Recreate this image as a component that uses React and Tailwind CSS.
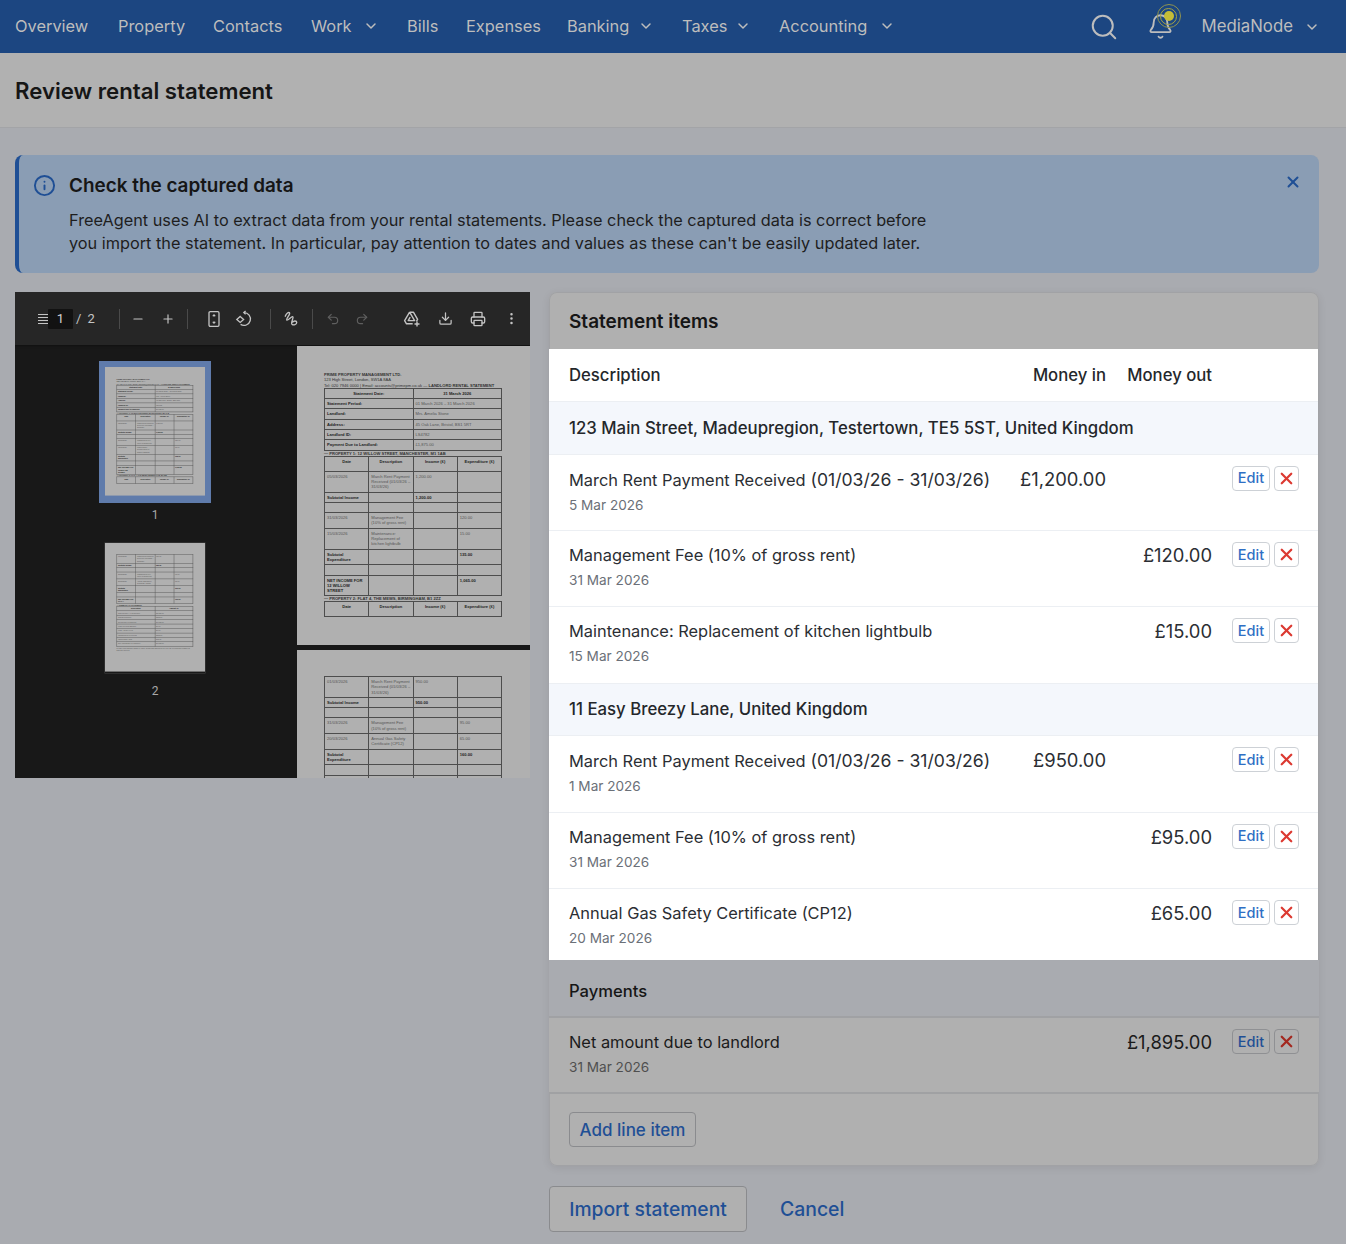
import React from "react";
import { Bell, ChevronDown, Download, Info, Minus, MoreVertical, Plus, Printer, Redo2, Search, Undo2, X } from "lucide-react";

const navItems = [
  { label: "Overview", width: "w-[103px]" },
  { label: "Property", width: "w-[95px]" },
  { label: "Contacts", width: "w-[98px]" },
  { label: "Work", width: "w-[96px]", menu: true },
  { label: "Bills", width: "w-[59px]" },
  { label: "Expenses", width: "w-[101px]" },
  { label: "Banking", width: "w-[115px]", menu: true },
  { label: "Taxes", width: "w-[97px]", menu: true },
  { label: "Accounting", width: "w-[144px]", menu: true },
];

const firstGroup = [
  { title: "March Rent Payment Received", range: "(01/03/26 - 31/03/26)", date: "5 Mar 2026", moneyIn: "£1,200.00" },
  { title: "Management Fee (10% of gross rent)", date: "31 Mar 2026", moneyOut: "£120.00" },
  { title: "Maintenance: Replacement of kitchen lightbulb", date: "15 Mar 2026", moneyOut: "£15.00" },
];

const secondGroup = [
  { title: "March Rent Payment Received", range: "(01/03/26 - 31/03/26)", date: "1 Mar 2026", moneyIn: "£950.00" },
  { title: "Management Fee (10% of gross rent)", date: "31 Mar 2026", moneyOut: "£95.00" },
  { title: "Annual Gas Safety Certificate (CP12)", date: "20 Mar 2026", moneyOut: "£65.00" },
];

const infoRows = [
  ["Statement Period:", "01 March 2026 – 31 March 2026"],
  ["Landlord:", "Mrs. Amelia Stone"],
  ["Address:", "45 Oak Lane, Bristol, BS1 5RT"],
  ["Landlord ID:", "LS4782"],
  ["Payment Due to Landlord:", "£1,875.00"],
];

const firstProperty = [
  { cells: ["05/03/2026", "March Rent Payment Received (01/03/26 – 31/03/26)", "1,200.00", ""] },
  { cells: ["Subtotal Income", "", "1,200.00", ""], bold: true },
  { cells: ["", "", "", ""] },
  { cells: ["31/03/2026", "Management Fee (10% of gross rent)", "", "120.00"] },
  { cells: ["15/03/2026", "Maintenance: Replacement of kitchen lightbulb", "", "15.00"] },
  { cells: ["Subtotal Expenditure", "", "", "135.00"], bold: true },
  { cells: ["", "", "", ""] },
  { cells: [<>NET INCOME FOR<br />12 WILLOW<br />STREET</>, "", "", "1,065.00"], bold: true },
];

const secondProperty = [
  { cells: ["01/03/2026", "March Rent Payment Received (01/03/26 – 31/03/26)", "950.00", ""] },
  { cells: ["Subtotal Income", "", "950.00", ""], bold: true },
  { cells: ["", "", "", ""] },
  { cells: ["31/03/2026", "Management Fee (10% of gross rent)", "", "95.00"] },
  { cells: ["20/03/2026", "Annual Gas Safety Certificate (CP12)", "", "65.00"] },
  { cells: ["Subtotal Expenditure", "", "", "160.00"], bold: true },
  { cells: ["", "", "", ""] },
  { cells: [<>NET INCOME FOR<br />FLAT 4</>, "", "", "790.00"], bold: true },
];

const summaryRows = [
  ["Total Income (All Properties)", "£2,150.00"],
  ["Total Expenditure", "£275.00"],
  ["Net Income to Landlord", "£1,875.00"],
  ["Less: Previous Balance", "£0.00"],
  ["Less: Agency Fees", "£0.00"],
  ["Management Fees Total", "£215.00"],
  ["Maintenance Total", "£15.00"],
  ["Net Amount Due to Landlord", "£1,875.00"],
];

function Cell({ children, bold, center }) {
  return (
    <td className={`border-[0.7px] border-[#4d4d4d] px-[2px] py-[2px] align-top break-words ${bold ? "font-bold text-[#222]" : "text-[#555]"} ${center ? "text-center" : ""}`}>
      {children || "\u00a0"}
    </td>
  );
}

function LedgerTable({ rows, header }) {
  return (
    <table className="w-[178px] table-fixed border-collapse">
      <tbody>
        {header && (
          <tr className="h-[15px]">
            {["Date", "Description", "Income (£)", "Expenditure (£)"].map((h) => (
              <Cell key={h} bold center>{h}</Cell>
            ))}
          </tr>
        )}
        {rows.map((row, i) => (
          <tr key={i}>
            {row.cells.map((c, j) => (
              <Cell key={j} bold={row.bold}>{c}</Cell>
            ))}
          </tr>
        ))}
      </tbody>
    </table>
  );
}

function TwoColTable({ head, rows, boldKey }) {
  return (
    <table className="w-[178px] table-fixed border-collapse">
      <tbody>
        <tr>
          <Cell bold center>{head[0]}</Cell>
          <Cell bold center>{head[1]}</Cell>
        </tr>
        {rows.map((r) => (
          <tr key={r[0]}>
            <Cell bold={boldKey}>{r[0]}</Cell>
            <Cell>{r[1]}</Cell>
          </tr>
        ))}
      </tbody>
    </table>
  );
}

function PageOne() {
  return (
    <div className="w-[233px] h-[299px] shrink-0 bg-[#b0b0b0] pt-[26px] pl-[27px] font-['Liberation_Sans',sans-serif] text-[4.1px] leading-[5.3px] text-[#333] overflow-hidden">
      <p className="font-bold">PRIME PROPERTY MANAGEMENT LTD.</p>
      <p>123 High Street, London, SW1A 8AA</p>
      <p className="whitespace-nowrap">
        Tel: 020 7946 0000 | Email: accounts@primepm.co.uk — <span className="font-bold">LANDLORD RENTAL STATEMENT</span>
      </p>
      <TwoColTable head={["Statement Date:", "31 March 2026"]} rows={infoRows} boldKey />
      <p className="font-bold leading-[4px] mt-px">— PROPERTY 1: 12 WILLOW STREET, MANCHESTER, M1 1AB</p>
      <LedgerTable rows={firstProperty} header />
      <p className="font-bold leading-[4px] mt-px">— PROPERTY 2: FLAT 4, THE MEWS, BIRMINGHAM, B1 2ZZ</p>
      <LedgerTable rows={[]} header />
    </div>
  );
}

function PageTwo() {
  return (
    <div className="w-[233px] h-[299px] shrink-0 bg-[#b0b0b0] pt-[26px] pl-[27px] font-['Liberation_Sans',sans-serif] text-[4.1px] leading-[5.3px] text-[#333] overflow-hidden">
      <LedgerTable rows={secondProperty} />
      <p className="font-bold mt-[0.5px]">— SUMMARY OF STATEMENT</p>
      <TwoColTable head={["Description", "Amount (£)"]} rows={summaryRows} />
      <p className="w-[178px] mt-[1px] text-[#555]">Please remit balance within 14 days. Retain this statement for your tax records and contact us with any queries.</p>
    </div>
  );
}

// thumbnails are the same pages shrunk down
function Thumb({ children }) {
  return (
    <div className="w-[100px] h-[130px] overflow-hidden">
      <div className="origin-top-left scale-[0.43]">{children}</div>
    </div>
  );
}

function PdfSep() {
  return <div className="w-px h-[20px] bg-[#4a4a4a]" />;
}

function PdfToolbar() {
  return (
    <div className="h-[53px] shrink-0 bg-[#262626] flex items-center pl-[23px] text-[#c4c4c4] font-['Roboto',sans-serif] text-[13px] shadow-[0_1px_2px_#111]">
      <div className="w-[10px] flex flex-col gap-[2px]">
        <div className="h-px bg-[#c4c4c4]" />
        <div className="h-px bg-[#c4c4c4]" />
        <div className="h-px bg-[#c4c4c4]" />
        <div className="h-px bg-[#c4c4c4]" />
      </div>
      <div className="w-[25px] h-[20px] bg-[#121212] flex items-center justify-center rounded-[1px] text-[#d4d4d4]">1</div>
      <span className="ml-[3px]">/</span>
      <span className="ml-[6px]">2</span>
      <div className="ml-[24px]"><PdfSep /></div>
      <div className="ml-[8px] w-[20px] flex justify-center"><Minus size={14} /></div>
      <div className="ml-[10px] w-[20px] flex justify-center"><Plus size={14} /></div>
      <div className="ml-[9px]"><PdfSep /></div>
      <div className="ml-[16px] w-[20px] flex justify-center">
        <svg width="14" height="18" viewBox="0 0 14 18" fill="none" stroke="currentColor" strokeWidth="1.3">
          <rect x="2" y="1.7" width="10" height="14.6" rx="1.2" />
          <path d="M5.8 6.2 7 5l1.2 1.2M5.8 11.8 7 13l1.2-1.2" />
        </svg>
      </div>
      <div className="ml-[10px] w-[20px] flex justify-center">
        <svg width="18" height="18" viewBox="0 0 18 18" fill="none" stroke="currentColor" strokeWidth="1.3">
          <path d="M9 2.6a6.4 6.4 0 1 1-3.4 11.8" />
          <path d="M10.6 1 8.8 2.6l1.8 1.7" />
          <path d="m5.2 6.4 3.4 3-3.4 3-3.4-3z" />
        </svg>
      </div>
      <div className="ml-[16px]"><PdfSep /></div>
      <div className="ml-[11px] w-[20px] flex justify-center">
        <svg width="18" height="18" viewBox="0 0 16 16" fill="none" stroke="currentColor" strokeWidth="1.2" strokeLinecap="round">
          <path d="M2 5.5C3 3 5 1.6 5.8 2.5 6.8 3.8 2.4 8 3.4 9c1 .8 4.2-3.8 5.4-3 1 .7-2.2 5.2-.8 6.6 1.3 1.2 4.3.4 4.2-1.6-.1-1.7-2.8-1.6-3.6-.2" />
        </svg>
      </div>
      <div className="ml-[10px]"><PdfSep /></div>
      <div className="ml-[10px] w-[20px] flex justify-center text-[#5f5f5f]"><Undo2 size={14} /></div>
      <div className="ml-[9px] w-[20px] flex justify-center text-[#5f5f5f]"><Redo2 size={14} /></div>
      <div className="ml-[30px] w-[20px] flex justify-center">
        <svg width="18" height="18" viewBox="0 0 18 18" fill="none" stroke="currentColor" strokeWidth="1.4" strokeLinejoin="round">
          <path d="M6.6 2.2h3.8l4.2 7.2-1.2 2M6.6 2.2 1.6 10.6l1.9 3.2h6.2M6.6 2.2l5 8.4H5.2l2-3.4" />
          <path d="M14 11.5v5M11.5 14h5" />
        </svg>
      </div>
      <div className="ml-[14px] w-[20px] flex justify-center"><Download size={15} /></div>
      <div className="ml-[12px] w-[20px] flex justify-center"><Printer size={16} /></div>
      <div className="ml-[14px] w-[20px] flex justify-center"><MoreVertical size={15} /></div>
    </div>
  );
}

function PdfViewer() {
  return (
    <div className="h-[486px] bg-[#181818] flex flex-col overflow-hidden">
      <PdfToolbar />
      <div className="flex min-h-0 flex-1">
        <div className="w-[282px] shrink-0 pr-[2px] flex flex-col items-center pt-[16px] font-['Roboto',sans-serif] text-[12px] text-[#a8a8a8]">
          <div className="p-[6px] bg-[#5f7bab]">
            <Thumb><PageOne /></Thumb>
          </div>
          <span className="mt-[3px] leading-[18px]">1</span>
          <div className="mt-[19px] shadow-[0_0_0_0.5px_#444]">
            <Thumb><PageTwo /></Thumb>
          </div>
          <span className="mt-[9px] leading-[18px]">2</span>
        </div>
        <div className="flex-1 min-w-0 overflow-hidden flex flex-col gap-[5px] pt-[1px]">
          <PageOne />
          <PageTwo />
        </div>
      </div>
    </div>
  );
}

function ItemActions({ dim }) {
  const edit = dim
    ? "bg-[#b0b0b0] border-[#8f9093] text-[#1f4f95]"
    : "bg-white border-[#cdd1d6] text-[#2f6fc4]";
  const del = dim
    ? "bg-[#b0b0b0] border-[#8f9093] text-[#a3281f]"
    : "bg-white border-[#cdd1d6] text-[#dc3a32]";
  return (
    <div className="flex justify-end gap-[4px]">
      <button className={`h-[25px] w-[38px] border rounded-[4px] text-[14.5px] font-medium flex items-center justify-center ${edit}`}>Edit</button>
      <button className={`h-[25px] w-[25px] border rounded-[4px] flex items-center justify-center ${del}`}>
        <X size={19} strokeWidth={2.8} />
      </button>
    </div>
  );
}

const rowGrid = "grid grid-cols-[minmax(0,1fr)_100px_106px_87px] pl-[20px]";

function ItemRow({ item, dim, last }) {
  const border = last ? "" : dim ? "border-b-[2px] border-[#a0a1a3]" : "border-b border-[#eceff3]";
  const money = `text-right text-[18.4px] leading-[27px] ${dim ? "text-[#1b1b1b]" : "text-[#2b2e33]"}`;
  return (
    <div className={`${rowGrid} pt-[11px] ${dim ? "pr-[20px] bg-[#b0b0b0]" : "pr-[19px]"} ${last ? "h-[71px]" : "h-[76.4px]"} ${border}`}>
      <div className="whitespace-nowrap">
        <p className={`text-[16.4px] leading-[27px] ${dim ? "text-[#1b1b1b]" : "text-[#2b2e33]"}`}>
          {item.title}
          {item.range && <span className="text-[17.6px]"> {item.range}</span>}
        </p>
        <p className={`text-[13.6px] leading-[22px] ${dim ? "text-[#4f4f4f]" : "text-[#6b7078]"}`}>{item.date}</p>
      </div>
      <p className={money}>{item.moneyIn}</p>
      <p className={money}>{item.moneyOut}</p>
      <ItemActions dim={dim} />
    </div>
  );
}

function GroupRow({ children }) {
  return (
    <div className="h-[52.5px] bg-[#f4f7fc] border-b border-[#eceff3] pl-[20px] pt-[1px] flex items-center text-[16.8px] font-medium text-[#24272b]">
      {children}
    </div>
  );
}

export default function App() {
  return (
    <div className="w-[1346px] h-[1244px] overflow-hidden bg-[#a9abb0] font-['Inter',sans-serif] text-[#1b1b1b]">
      <nav className="h-[53px] bg-[#1c4681] flex items-center pl-[15px] pr-[26px] text-[#bdbdbd] text-[16.4px]">
        <ul className="flex items-center">
          {navItems.map((n) => (
            <li key={n.label} className={`flex items-center justify-between pr-[28px] ${n.width}`}>
              {n.label}
              {n.menu && <ChevronDown size={16} strokeWidth={2.2} />}
            </li>
          ))}
        </ul>
        <div className="ml-auto flex items-center">
          <Search size={30} strokeWidth={1.6} />
          <div className="relative ml-[28px] mr-[28px]">
            <Bell size={27} strokeWidth={1.6} />
            <span className="absolute -top-[9px] left-[10px] w-[24px] h-[24px] rounded-full border border-[#8f9350] flex items-center justify-center">
              <span className="w-[17px] h-[17px] rounded-full border border-[#a5a445] flex items-center justify-center">
                <span className="w-[10px] h-[10px] rounded-full bg-[#c4bc37]" />
              </span>
            </span>
          </div>
          <span className="text-[16.8px]">MediaNode</span>
          <ChevronDown size={16} strokeWidth={2.2} className="ml-[11px]" />
        </div>
      </nav>

      <header className="h-[75px] bg-[#b1b1b1] border-b border-[#a3a4a7] pl-[15px] pt-[2px] flex items-center">
        <h1 className="text-[22.2px] font-semibold text-[#161616]">Review rental statement</h1>
      </header>

      <main className="pl-[15px] pr-[27px] pt-[27px]">
        <div className="relative h-[118px] bg-[#8a9db4] rounded-[8px] border-l-[4px] border-[#1f4f95] pl-[50px] pt-[18px]">
          <Info size={23} strokeWidth={2} className="absolute left-[13.5px] top-[18.5px] text-[#1f4f95]" />
          <h2 className="text-[18.9px] font-semibold leading-[26px] text-[#161616]">Check the captured data</h2>
          <p className="mt-[10px] text-[16.3px] leading-[23px] w-[880px] text-[#1e1e1e]">
            FreeAgent uses AI to extract data from your rental statements. Please check the captured data is correct before you import the statement. In particular, pay attention to dates and values as these can't be easily updated later.
          </p>
          <X size={18} strokeWidth={2.6} className="absolute right-[17px] top-[18px] text-[#1f4f95]" />
        </div>

        <div className="mt-[19px] grid grid-cols-[515px_770px] gap-[19px] items-start">
          <PdfViewer />

          <div>
            <section className="h-[874px] rounded-[8px] bg-[#b0b0b0] overflow-hidden shadow-[inset_0_0_0_1px_#a1a2a5,0_2px_8px_rgba(0,0,0,0.08)]">
              <h2 className="h-[57px] pl-[20px] pt-[4px] flex items-center text-[19px] font-semibold text-[#161616]">Statement items</h2>

              <div className="bg-white h-[611px] mr-px">
                <div className={`${rowGrid} pr-[19px] h-[53px] pt-[2px] items-center border-b border-[#eceff3] text-[16.7px] font-medium text-[#24272b]`}>
                  <span>Description</span>
                  <span className="text-right whitespace-nowrap">Money in</span>
                  <span className="text-right whitespace-nowrap">Money out</span>
                </div>
                <GroupRow>123 Main Street, Madeupregion, Testertown, TE5 5ST, United Kingdom</GroupRow>
                {firstGroup.map((it) => (
                  <ItemRow key={it.date} item={it} />
                ))}
                <GroupRow>11 Easy Breezy Lane, United Kingdom</GroupRow>
                {secondGroup.map((it, i) => (
                  <ItemRow key={it.date} item={it} last={i === secondGroup.length - 1} />
                ))}
              </div>

              <h3 className="h-[58px] bg-[#a9abb0] border-b-[2px] border-[#a0a1a4] pl-[20px] pt-[7px] flex items-center text-[16.6px] font-medium text-[#161616]">Payments</h3>
              <ItemRow item={{ title: "Net amount due to landlord", date: "31 Mar 2026", moneyOut: "£1,895.00" }} dim />
              <div className="pl-[20px] pt-[18px]">
                <button className="h-[35px] w-[127px] pt-[2px] border border-[#8a8b8e] rounded-[4px] text-[17px] font-medium text-[#1f4f95]">Add line item</button>
              </div>
            </section>

            <div className="mt-[20px] flex items-center gap-[33px]">
              <button className="h-[46px] w-[198px] border border-[#8a8b8e] rounded-[4px] bg-[#b0b0b0] text-[19.3px] font-medium text-[#1f4f95]">Import statement</button>
              <button className="mt-[2px] text-[19.4px] font-medium text-[#1f4f95]">Cancel</button>
            </div>
          </div>
        </div>
      </main>
    </div>
  );
}
